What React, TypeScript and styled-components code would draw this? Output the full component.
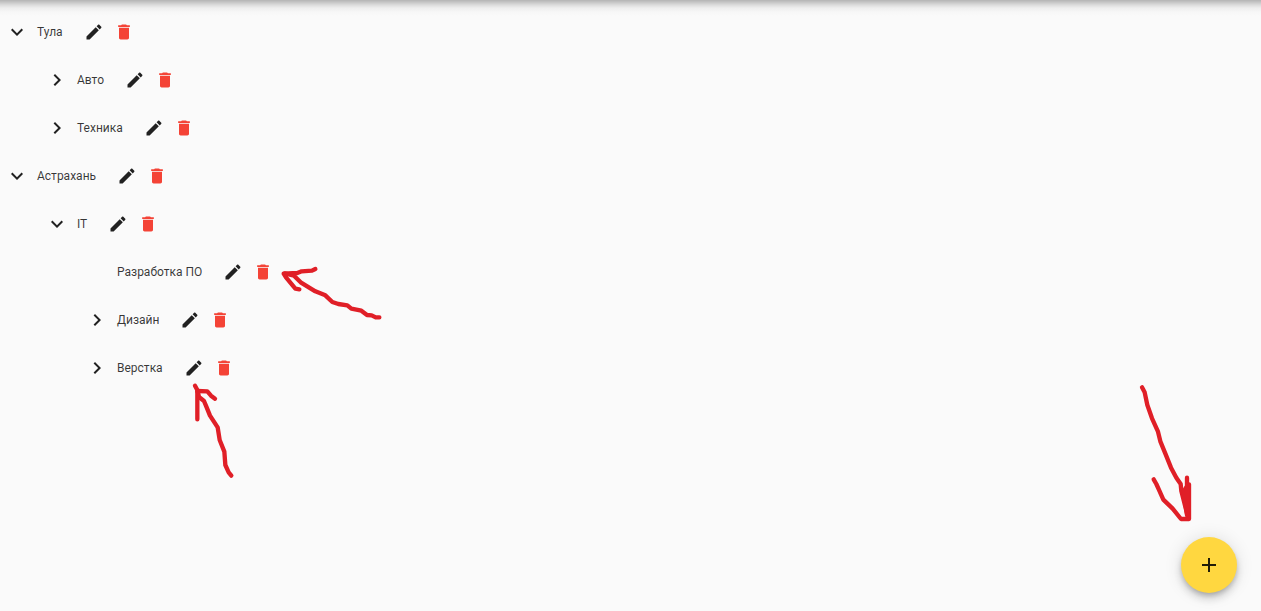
import React, { useState } from 'react';
import styled, { createGlobalStyle } from 'styled-components';

const GlobalStyle = createGlobalStyle`
  body {
    margin: 0;
    background: #fafafa;
    color: rgba(0, 0, 0, 0.78);
    font-family: Roboto, "Liberation Sans", sans-serif;
    font-size: 12px;
  }
`;

const Page = styled.main`
  position: relative;
  box-sizing: border-box;
  min-height: 100vh;
  padding-top: 8px;
  background: linear-gradient(#b4b4b4 0, #c4c4c4 2px, #dcdcdc 5px, #eeeeee 8px, #f7f7f7 12px, #fafafa 16px);
`;

const Tree = styled.ul`
  margin: 0;
  padding: 0 0 0 5px;
  list-style: none;
`;

const Branch = styled.ul`
  margin: 0;
  padding: 0 0 0 40px;
  list-style: none;
`;

const Row = styled.div`
  display: flex;
  align-items: center;
  height: 48px;
`;

const IconButton = styled.button<{ $size: number; $color?: string }>`
  display: flex;
  flex: none;
  width: ${(p) => p.$size}px;
  height: ${(p) => p.$size}px;
  padding: 0;
  border: 0;
  background: none;
  color: ${(p) => p.$color ?? '#212121'};
  cursor: pointer;
`;

const TogglePlaceholder = styled.span`
  width: 24px;
`;

const Label = styled.span`
  margin: 0 21px 0 8px;
  line-height: 16px;
  white-space: nowrap;
`;

const Actions = styled.div`
  display: flex;
  gap: 10px;
`;

const Icon = styled.svg`
  display: block;
  width: 100%;
  height: 100%;
  fill: currentColor;
`;

const AddButton = styled.button`
  position: fixed;
  right: 24px;
  bottom: 18px;
  display: flex;
  align-items: center;
  justify-content: center;
  width: 56px;
  height: 56px;
  padding: 16px;
  border: 0;
  border-radius: 50%;
  background: #ffd740;
  color: rgba(0, 0, 0, 0.87);
  box-shadow: 0 3px 5px -1px rgba(0, 0, 0, 0.2), 0 6px 10px 0 rgba(0, 0, 0, 0.14),
    0 1px 18px 0 rgba(0, 0, 0, 0.12);
  cursor: pointer;
`;

const Mark = styled.svg`
  fill: none;
  stroke: #e01f27;
  stroke-width: 13;
  stroke-linecap: round;
  stroke-linejoin: round;
  pointer-events: none;
`;

const DeleteMark = styled(Mark)`
  position: absolute;
  left: 270px;
  top: 255px;
  width: 125px;
  height: 75px;
`;

const EditMark = styled(Mark)`
  position: absolute;
  left: 180px;
  top: 350px;
  width: 70px;
  height: 135px;
`;

const AddMark = styled(Mark)`
  position: fixed;
  right: 56px;
  bottom: 81px;
  width: 75px;
  height: 155px;
`;

const paths = {
  expanded: 'M16.59 8.59 12 13.17 7.41 8.59 6 10l6 6 6-6z',
  collapsed: 'M10 6 8.59 7.41 13.17 12l-4.58 4.59L10 18l6-6z',
  edit: 'M3 17.25V21h3.75L17.81 9.94l-3.75-3.75L3 17.25zM20.71 7.04c.39-.39.39-1.02 0-1.41l-2.34-2.34c-.39-.39-1.02-.39-1.41 0l-1.83 1.83 3.75 3.75 1.83-1.83z',
  remove: 'M6 19c0 1.1.9 2 2 2h8c1.1 0 2-.9 2-2V7H6v12zM19 4h-3.5l-1-1h-5l-1 1H5v2h14V4z',
  add: 'M19 13h-6v6h-2v-6H5v-2h6V5h2v6h6v2z',
};

function Glyph({ name }: { name: keyof typeof paths }) {
  return (
    <Icon viewBox="0 0 24 24" aria-hidden="true">
      <path d={paths[name]} />
    </Icon>
  );
}

interface TreeItem {
  name: string;
  open?: boolean;
  leaf?: boolean;
  children?: TreeItem[];
}

const items: TreeItem[] = [
  { name: 'Тула', open: true, children: [{ name: 'Авто' }, { name: 'Техника' }] },
  {
    name: 'Астрахань',
    open: true,
    children: [
      {
        name: 'IT',
        open: true,
        children: [{ name: 'Разработка ПО', leaf: true }, { name: 'Дизайн' }, { name: 'Верстка' }],
      },
    ],
  },
];

function Node({ item }: { item: TreeItem }) {
  const [open, setOpen] = useState(Boolean(item.open));
  return (
    <li>
      <Row>
        {item.leaf ? (
          <TogglePlaceholder />
        ) : (
          <IconButton
            type="button"
            $size={24}
            aria-expanded={open}
            aria-label={item.name}
            onClick={() => setOpen(!open)}
          >
            <Glyph name={open ? 'expanded' : 'collapsed'} />
          </IconButton>
        )}
        <Label>{item.name}</Label>
        <Actions>
          <IconButton type="button" $size={20} aria-label={`Изменить ${item.name}`}>
            <Glyph name="edit" />
          </IconButton>
          <IconButton type="button" $size={20} $color="#f44336" aria-label={`Удалить ${item.name}`}>
            <Glyph name="remove" />
          </IconButton>
        </Actions>
      </Row>
      {open && item.children && (
        <Branch>
          {item.children.map((child) => (
            <Node key={child.name} item={child} />
          ))}
        </Branch>
      )}
    </li>
  );
}

export default function App() {
  return (
    <>
      <GlobalStyle />
      <Page>
        <Tree>
          {items.map((item) => (
            <Node key={item.name} item={item} />
          ))}
        </Tree>
        <DeleteMark viewBox="0 0 375 225" aria-hidden="true">
          <path d="M136 42 L126 47 L95 49 L82 54 L41 56 L48 67 L76 101 L88 103" />
          <path d="M44 55 L72 62 L92 82 L136 109 L166 121 L187 141 L205 147 L232 151 L244 161 L274 167 L291 180 L305 181 L317 187 L328 187" />
        </DeleteMark>
        <EditMark viewBox="0 0 210 405" aria-hidden="true">
          <path d="M45 107 L52 120 L52 208" />
          <path d="M52 123 L82 124 L93 137 L105 146" />
          <path d="M53 124 L57 141 L72 153 L80 172 L90 197 L113 232 L119 270 L133 305 L136 345 L146 367 L154 377" />
        </EditMark>
        <AddMark viewBox="0 0 225 465" aria-hidden="true">
          <path d="M36 37 L44 52 L52 90 L66 130 L84 170 L91 199 L107 238 L123 278 L139 308 L152 327 L154 348 L174 427" />
          <path d="M71 313 L79 327 L88 347 L100 374 L128 401 L153 432 L177 432 L177 328" />
          <path d="M171 308 L171 420 L161 350 L170 335 L172 400" />
        </AddMark>
      </Page>
      <AddButton type="button" aria-label="Добавить">
        <Glyph name="add" />
      </AddButton>
    </>
  );
}
